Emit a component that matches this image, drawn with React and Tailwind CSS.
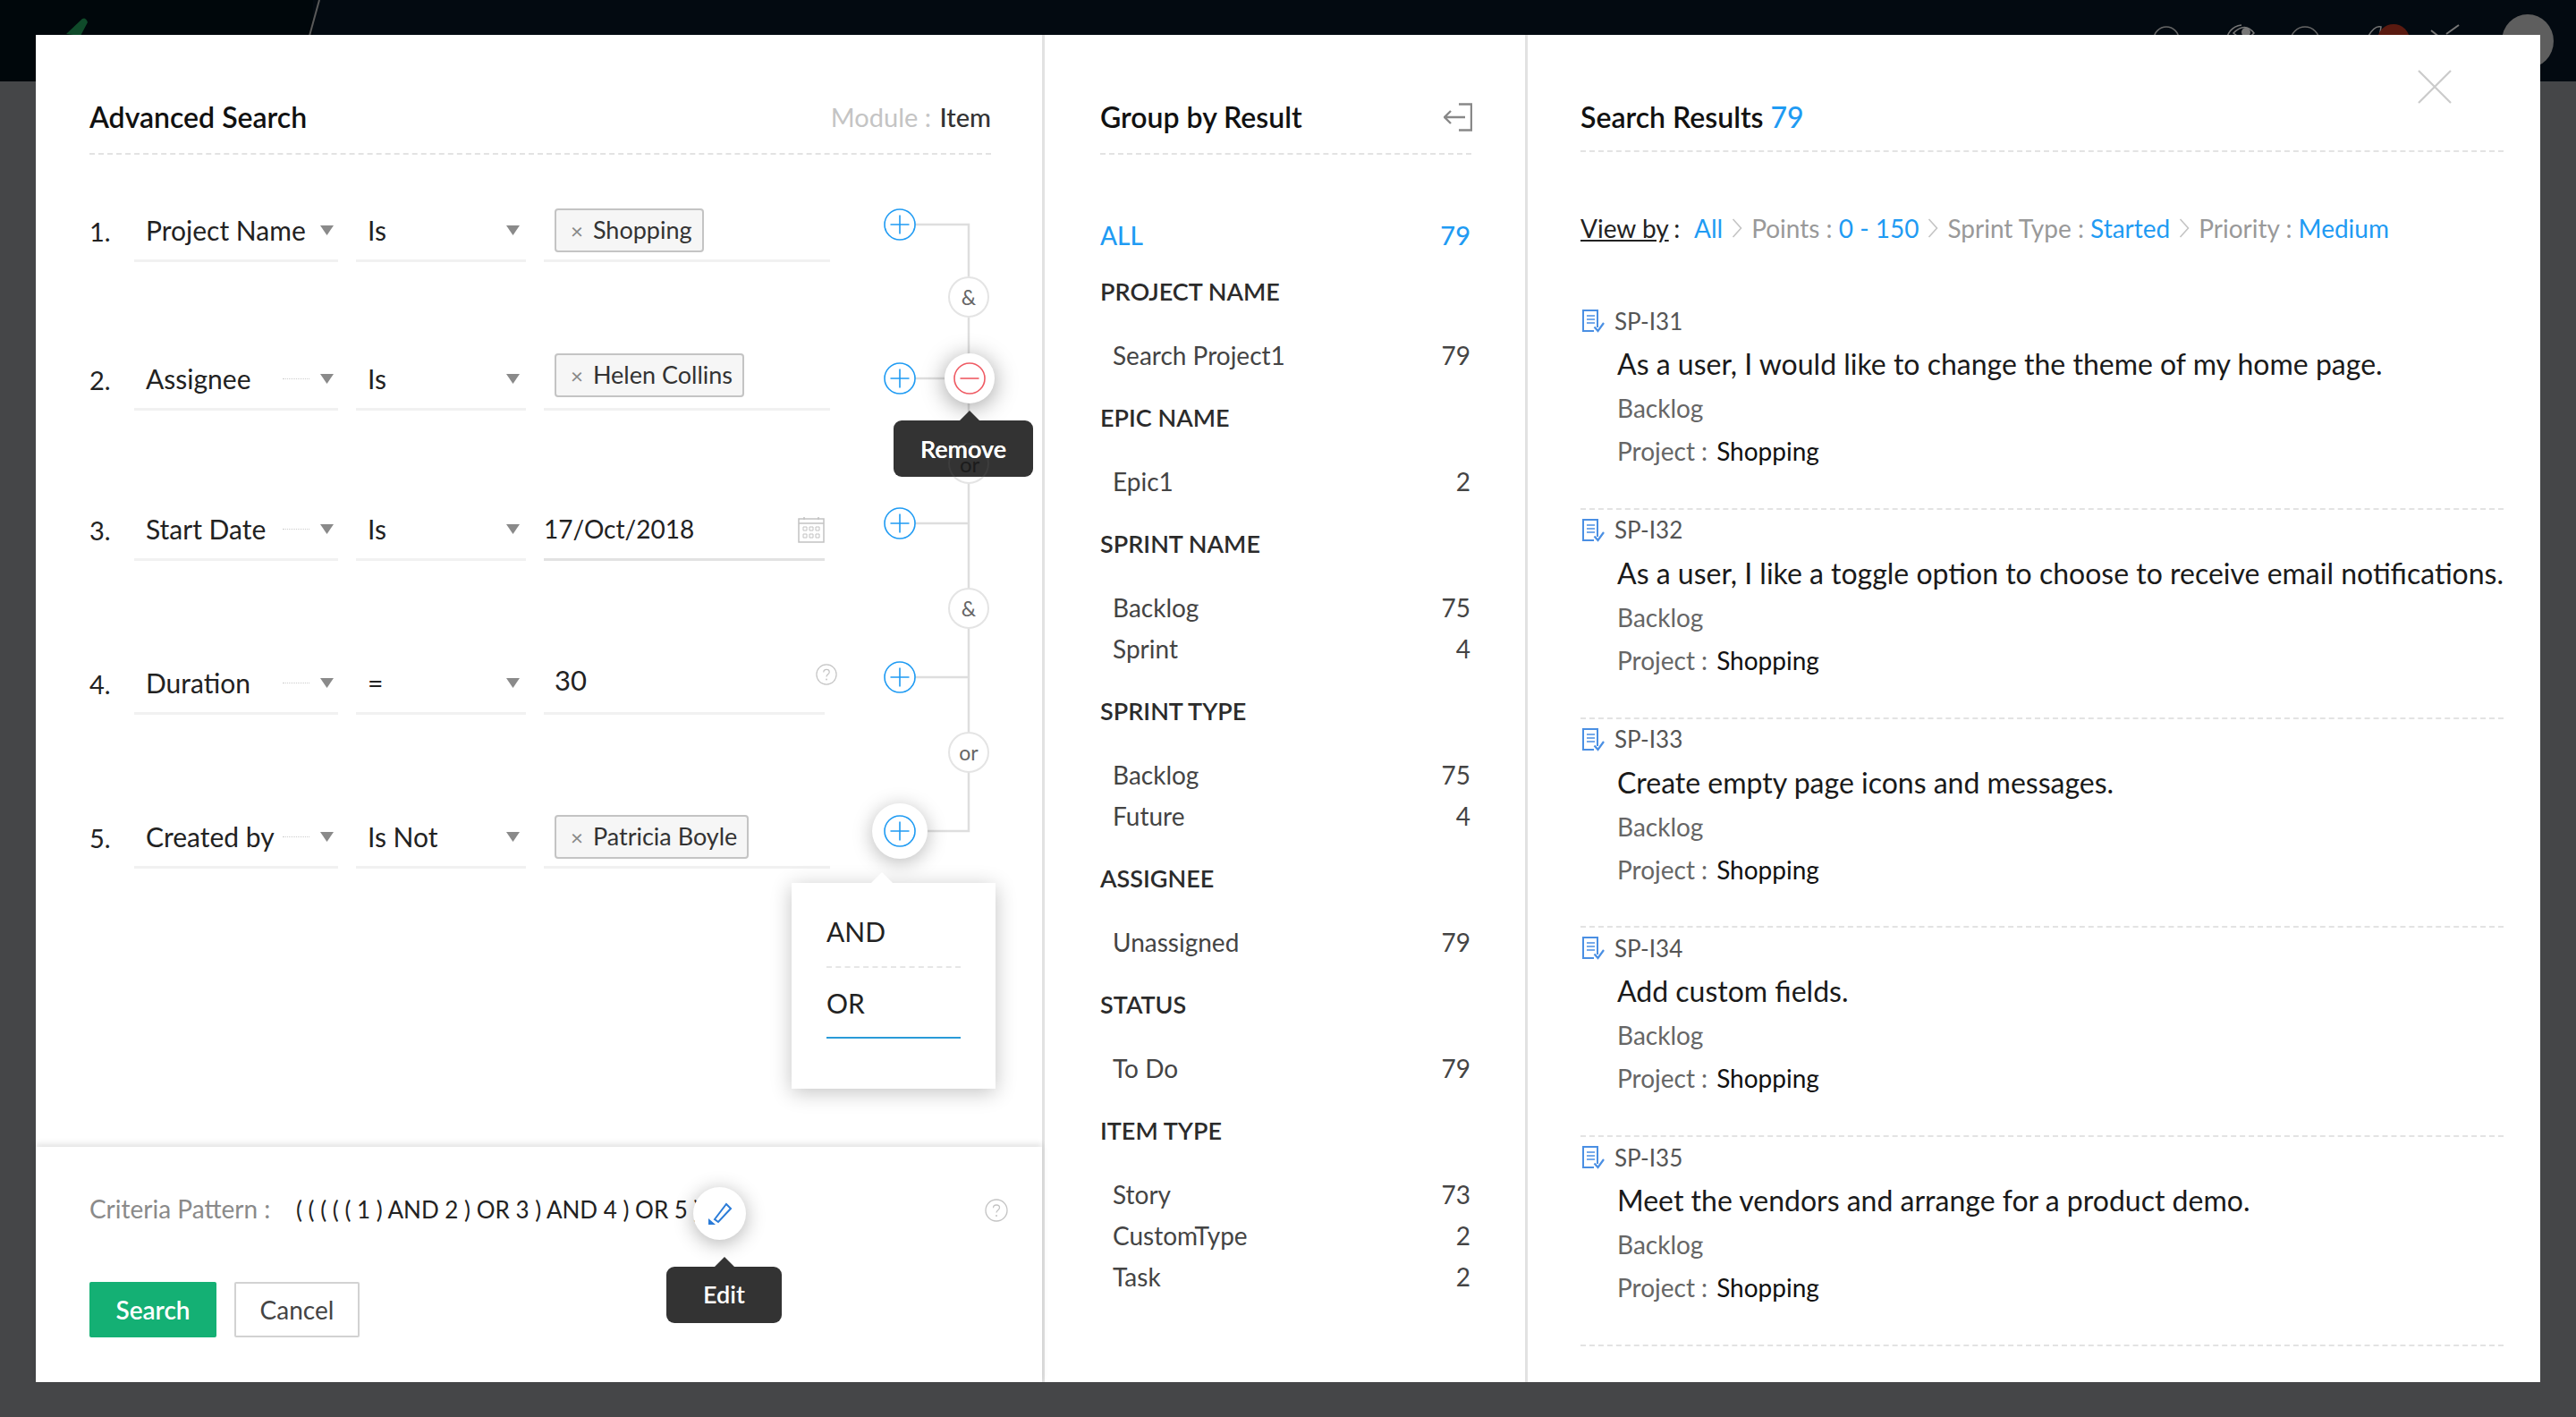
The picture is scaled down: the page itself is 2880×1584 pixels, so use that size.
import React from "react";

const Caret = () => (
  <svg width="15" height="11" viewBox="0 0 15 11" className="shrink-0"><polygon points="0,0 15,0 7.5,11" fill="#8a8a8a" /></svg>
);

const Chip = ({ label, className }) => (
  <div className={"flex items-center h-[49px] ml-[12px] pl-[16px] border-2 border-[#c4c4c4] rounded-[4px] bg-[#f6f6f6] text-[27px] text-[#333] " + className}>
    <span className="text-[24px] text-[#888] leading-none mr-[11px]">×</span>
    <span>{label}</span>
  </div>
);

const Sel = ({ children, w, pad, dots }) => (
  <div className={"relative flex items-center h-[60px] pb-[8px] border-b-[3px] border-[#f1f1f1] text-[30px] text-[#222] " + w + " " + pad}>
    <span className="flex-1">{children}</span>
    {dots && <span className="w-[30px] mr-[12px] border-t border-dotted border-[#ccc]" />}
    <Caret />
  </div>
);

const rows = [
  { n: "1.", f: "Project Name", o: "Is", mt: "mt-0", dots: false },
  { n: "2.", f: "Assignee", o: "Is", mt: "mt-[106px]", dots: true },
  { n: "3.", f: "Start Date", o: "Is", mt: "mt-[108px]", dots: true },
  { n: "4.", f: "Duration", o: "=", mt: "mt-[112px]", dots: true },
  { n: "5.", f: "Created by", o: "Is Not", mt: "mt-[112px]", dots: true },
];

const Help = ({ className }) => (
  <svg viewBox="0 0 26 26" className={className} fill="none">
    <circle cx="13" cy="13" r="12" stroke="#c4c4c4" strokeWidth="1.3" />
    <path d="M9.5 10.2c0-2 1.6-3.2 3.5-3.2s3.5 1.2 3.5 3c0 2.6-3.5 2.8-3.5 5.6" stroke="#c4c4c4" strokeWidth="1.3" />
    <circle cx="13" cy="19" r="1" fill="#c4c4c4" />
  </svg>
);

const Value = ({ i }) => {
  if (i === 0) return <div className="w-[320px] h-[60px] ml-[20px] flex items-end pb-[8px] border-b-[3px] border-[#f1f1f1]"><Chip label="Shopping" className="w-[167px]" /></div>;
  if (i === 1) return <div className="w-[320px] h-[60px] ml-[20px] flex items-end pb-[12px] border-b-[3px] border-[#f1f1f1]"><Chip label="Helen Collins" className="w-[212px]" /></div>;
  if (i === 4) return <div className="w-[320px] h-[60px] ml-[20px] flex items-end pb-[8px] border-b-[3px] border-[#f1f1f1]"><Chip label="Patricia Boyle" className="w-[217px]" /></div>;
  if (i === 2)
    return (
      <div className="w-[314px] h-[60px] ml-[20px] flex items-center justify-between pb-[8px] border-b-[3px] border-[#e2e2e2] text-[28px] text-[#222]">
        <span className="-mt-[2px]">17/Oct/2018</span>
        <svg width="30" height="30" viewBox="0 0 30 30" fill="none" stroke="#c2c2c2" strokeWidth="1.5">
          <rect x="1" y="3" width="28" height="26" />
          <path d="M1 8h28M7 1v3M23 1v3" />
          <path d="M6 12h4v4H6zM13 12h4v4h-4zM20 12h4v4h-4zM6 20h4v4H6zM13 20h4v4h-4zM20 20h4v4h-4z" strokeWidth="1" />
        </svg>
      </div>
    );
  return (
    <div className="relative w-[314px] h-[60px] ml-[20px] pl-[12px] flex items-center pb-[8px] border-b-[3px] border-[#f1f1f1] text-[31px] text-[#222]">
      <span className="-mt-[6px]">30</span>
      <Help className="absolute left-[304px] top-[3px] w-[24px] h-[24px]" />
    </div>
  );
};

/* connector diagram: coordinates are the modal's */
const plusY = [212, 384, 546, 718, 890];
const Connectors = () => (
  <svg className="absolute left-0 top-0 w-[1128px] h-[1000px] pointer-events-none" fill="none">
    <path d="M966 212H1043V890H984" stroke="#dedede" strokeWidth="2.5" />
    <path d="M966 384H1043M966 546H1043M966 718H1043" stroke="#dedede" strokeWidth="2.5" />
  </svg>
);
const Plus = ({ y, color = "#1f9bf3", minus }) => (
  <svg width="36" height="36" viewBox="0 0 36 36" fill="none" className={y}>
    <circle cx="18" cy="18" r="17" fill="#fff" stroke={color} strokeWidth="1.6" />
    <path d={minus ? "M7.5 18h21" : "M7.5 18h21M18 7.5v21"} stroke={color} strokeWidth="1.6" />
  </svg>
);
const Pill = ({ label, cls }) => (
  <div className={"absolute left-[1020px] w-[46px] h-[46px] rounded-full bg-white border-2 border-[#e4e4e4] flex items-center justify-center text-[23px] text-[#666] " + cls}>{label}</div>
);

const Tooltip = ({ label, cls, arrow }) => (
  <div className={"absolute rounded-[9px] bg-[#333] flex items-center justify-center text-[27px] font-semibold text-white " + cls}>
    <svg width="44" height="12" viewBox="0 0 44 12" className={"absolute -top-[11px] " + arrow}><polygon points="22,0 33,11 33,12 11,12 11,11" fill="#333" /></svg>
    {label}
  </div>
);

const LeftPanel = () => (
  <div className="relative w-[1128px] h-full flex flex-col shrink-0 border-r-[3px] border-[#e2e2e2]">
    <div className="mx-[60px] w-[1008px] mt-[69px] h-[46px] flex items-center justify-between">
      <h2 className="text-[32px] font-semibold text-[#111]">Advanced Search</h2>
      <div className="text-[29px] text-[#c4c4c4]">Module : <span className="text-[#333] font-medium ml-[2px]">Item</span></div>
    </div>
    <div className="mx-[60px] w-[1008px] mt-[17px] border-t-2 border-dashed border-[#e3e3e3]" />
    <div className="mt-[60px] pl-[60px]">
      {rows.map((r, i) => (
        <div key={r.n} className={"flex " + r.mt}>
          <div className="w-[50px] h-[60px] pb-[8px] flex items-center text-[29px] text-[#222]">{r.n}</div>
          <Sel w="w-[228px]" pad="pl-[13px] pr-[5px]" dots={r.dots}>{r.f}</Sel>
          <Sel w="w-[190px] ml-[20px]" pad="pl-[13px] pr-[7px]">{r.o}</Sel>
          <Value i={i} />
        </div>
      ))}
    </div>

    <Connectors />
    {plusY.map((y, i) => (
      <div key={y} className="absolute left-[948px]" style={{ top: y - 18 }}>
        {i === 4 && <div className="absolute -left-[13px] -top-[13px] w-[62px] h-[62px] rounded-full bg-white shadow-[0_4px_22px_rgba(0,0,0,0.28)]" />}
        <div className="relative"><Plus /></div>
      </div>
    ))}
    <Pill label="&" cls="top-[270px]" />
    <Pill label="or" cls="top-[456px]" />
    <Pill label="&" cls="top-[618px]" />
    <Pill label="or" cls="top-[779px]" />
    <div className="absolute left-[1016px] top-[356px] w-[56px] h-[56px] rounded-full bg-white shadow-[0_4px_26px_rgba(0,0,0,0.38)] flex items-center justify-center">
      <Plus color="#ef5a63" minus />
    </div>
    <Tooltip label="Remove" cls="left-[959px] top-[431px] w-[156px] h-[63px] pt-[2px]" arrow="left-[63px]" />
    <div className="absolute left-[1020px] top-[456px] w-[46px] h-[38px] overflow-hidden">
      <div className="w-[46px] h-[46px] rounded-full border-2 border-[#3d3d3d]" />
    </div>
    <span className="absolute left-[1033px] top-[463px] text-[24px] leading-[34px] text-[#1c1c1c]">or</span>
    <span className="absolute left-[959px] top-[431px] w-[156px] h-[63px] pt-[2px] flex items-center justify-center text-[27px] font-semibold text-white">Remove</span>

    {/* AND / OR popover */}
    <div className="absolute left-[845px] top-[948px] w-[228px] h-[230px] bg-white shadow-[0_4px_22px_rgba(0,0,0,0.24)] px-[39px] text-[30px] text-[#222]">
      <svg width="40" height="13" viewBox="0 0 40 13" className="absolute left-[81px] -top-[12px]"><polygon points="20,0 33,13 7,13" fill="#fff" /></svg>
      <div className="h-[95px] pt-[15px] flex items-center border-b-2 border-dashed border-[#e6e6e6]"><span>AND</span></div>
      <div className="h-[79px] pt-[2px] flex items-center border-b-2 border-[#2a9bd8]"><span>OR</span></div>
    </div>

    {/* footer */}
    <div className="mt-auto w-[1125px] h-[263px] relative pl-[60px] shadow-[0_-3px_7px_rgba(0,0,0,0.12)]">
      <div className="flex items-center pt-[50px] h-[91px]">
        <span className="text-[28px] text-[#8a8a8a] w-[231px] -mt-[3px]">Criteria Pattern :</span>
        <span className="text-[26px] text-[#222] whitespace-pre">( ( ( ( ( 1 ) AND 2 ) OR 3 ) AND 4 ) OR 5 )</span>
      </div>
      <div className="absolute left-[735px] top-[45px] w-[59px] h-[59px] rounded-full bg-white shadow-[0_4px_22px_rgba(0,0,0,0.3)] flex items-center justify-center">
        <svg width="28" height="28" viewBox="0 0 28 28" fill="none">
          <path d="M9 20 L22 3 L27 8 L13 23 Z" transform="translate(-1,0)" stroke="#2a7bd8" strokeWidth="2" />
          <polygon points="1,19 1,26 9,26" fill="#2a7bd8" />
        </svg>
      </div>
      <Tooltip label="Edit" cls="left-[705px] top-[134px] w-[129px] h-[63px]" arrow="left-[43px]" />
      <Help className="absolute left-[1061px] top-[58px] w-[26px] h-[26px]" />
      <div className="flex mt-[60px] gap-[20px]">
        <div className="w-[142px] h-[62px] rounded-[2px] bg-[#14b074] flex items-center justify-center text-[28px] font-semibold text-white">Search</div>
        <div className="w-[140px] h-[62px] rounded-[2px] border-2 border-[#d2d2d2] bg-white flex items-center justify-center text-[28px] text-[#444]">Cancel</div>
      </div>
    </div>
  </div>
);

const groups = [
  ["PROJECT NAME", [["Search Project1", 79]]],
  ["EPIC NAME", [["Epic1", 2]]],
  ["SPRINT NAME", [["Backlog", 75], ["Sprint", 4]]],
  ["SPRINT TYPE", [["Backlog", 75], ["Future", 4]]],
  ["ASSIGNEE", [["Unassigned", 79]]],
  ["STATUS", [["To Do", 79]]],
  ["ITEM TYPE", [["Story", 73], ["CustomType", 2], ["Task", 2]]],
];

const MiddlePanel = () => (
  <div className="w-[540px] h-full shrink-0 border-r-[3px] border-[#e2e2e2] pl-[62px] pr-[60px]">
    <div className="mt-[69px] h-[46px] flex items-center justify-between">
      <h2 className="text-[32px] font-semibold text-[#111]">Group by Result</h2>
      <svg width="32" height="32" viewBox="0 0 32 32" fill="none" stroke="#888" strokeWidth="2.4" className="-mr-[1px]">
        <path d="M17 1.5H31V30.5H17" />
        <path d="M1 16H24M8 9L1 16L8 23" />
      </svg>
    </div>
    <div className="mt-[17px] border-t-2 border-dashed border-[#e3e3e3]" />
    <div className="mt-[67px] h-[46px] flex items-center justify-between text-[28px] font-medium text-[#1f9bf3]">
      <span>ALL</span><span className="text-[29px] pr-[1px]">79</span>
    </div>
    <div className="mt-[17px]">
      {groups.map(([h, items]) => (
        <div key={h} className="pt-[0px] pb-[24px]">
          <div className="h-[46px] mb-[25px] flex items-center text-[27px] font-semibold text-[#2b2b2b]">{h}</div>
          {items.map(([k, v]) => (
            <div key={k} className="h-[46px] flex items-center justify-between pl-[14px] pr-[1px] text-[28px] text-[#444]">
              <span>{k}</span><span>{v}</span>
            </div>
          ))}
        </div>
      ))}
    </div>
  </div>
);

const results = [
  ["SP-I31", "As a user, I would like to change the theme of my home page."],
  ["SP-I32", "As a user, I like a toggle option to choose to receive email notifications."],
  ["SP-I33", "Create empty page icons and messages."],
  ["SP-I34", "Add custom fields."],
  ["SP-I35", "Meet the vendors and arrange for a product demo."],
];

const Chev = () => (
  <svg width="12" height="24" viewBox="0 0 12 24" fill="none" stroke="#c4c4c4" strokeWidth="1.6" className="mx-[10px]"><path d="M1.5 2L10.5 12L1.5 22" /></svg>
);

const DocIcon = () => (
  <svg width="25" height="26" viewBox="0 0 25 26" fill="none" className="shrink-0">
    <path d="M17 20V1H1V24H13" stroke="#4a8fe3" strokeWidth="2" />
    <path d="M5 7h9M5 11h9M5 15h9" stroke="#4a8fe3" strokeWidth="1.7" />
    <path d="M13.5 19.5L17.5 24L24 15" stroke="#4a8fe3" strokeWidth="2.2" />
  </svg>
);

const RightPanel = () => (
  <div className="relative flex-1 pl-[59px] pr-[60px]">
    <svg width="38" height="38" viewBox="0 0 38 38" className="absolute left-[995px] top-[39px]" stroke="#cbcbcb" strokeWidth="2.2"><path d="M1 1L37 37M37 1L1 37" /></svg>
    <div className="mt-[69px] h-[46px] flex items-center">
      <h2 className="text-[32px] font-semibold text-[#111]">Search Results <span className="text-[#1f9bf3] font-medium">79</span></h2>
    </div>
    <div className="mt-[14px] border-t-2 border-dashed border-[#e3e3e3]" />
    <div className="mt-[63px] h-[44px] flex items-center text-[28px] text-[#999] whitespace-pre">
      <span className="text-[#222] underline w-[97px]">View by</span>
      <span className="text-[#222] w-[30px]"> :</span>
      <span className="text-[#1f9bf3]">All</span>
      <Chev />
      <span>Points : </span><span className="text-[#1f9bf3]">0 - 150</span>
      <Chev />
      <span>Sprint Type : </span><span className="text-[#1f9bf3]">Started</span>
      <Chev />
      <span>Priority : </span><span className="text-[#1f9bf3]">Medium</span>
    </div>
    <div className="mt-[59px]">
      {results.map(([id, title]) => (
        <div key={id} className="h-[233.8px] border-b-2 border-dashed border-[#e3e3e3]">
          <div className="h-[46px] flex items-center pl-[2px]">
            <DocIcon />
            <span className="ml-[11px] text-[26px] text-[#555]">{id}</span>
          </div>
          <div className="pl-[41px] h-[50px] flex items-center text-[32px] text-[#1a1a1a] whitespace-nowrap">{title}</div>
          <div className="pl-[41px] h-[48px] flex items-center text-[28px] text-[#666]">Backlog</div>
          <div className="pl-[41px] h-[48px] flex items-center text-[28px] text-[#666]">Project :<span className="ml-[10px] text-[#111]">Shopping</span></div>
        </div>
      ))}
    </div>
  </div>
);

const TopBar = () => (
  <div className="absolute left-0 top-0 w-full h-[91px] bg-[#030a11] overflow-hidden">
    <div className="absolute left-0 top-0 w-[350px] h-full bg-[#00070b]" />
    <svg width="2880" height="91" className="absolute left-0 top-0" fill="none">
      <path d="M74 38L92 21Q96 19 98 25L90 40Z" fill="#0f4a2a" />
      <path d="M357 0L346 40" stroke="#5a5a5a" strokeWidth="2" />
      <circle cx="2422" cy="44" r="14" stroke="#666" strokeWidth="1.5" />
      <path d="M2488 50Q2490 30 2506 28M2497 37Q2510 24 2520 37Q2510 48 2497 37Z" stroke="#777" strokeWidth="1.5" />
      <circle cx="2511" cy="36" r="5" fill="#777" />
      <circle cx="2577" cy="46" r="16" stroke="#666" strokeWidth="1.5" />
      <path d="M2648 40Q2655 28 2662 30L2660 42" stroke="#777" strokeWidth="1.5" />
      <circle cx="2676" cy="45" r="18" fill="#5a1a10" />
      <path d="M2718 34l10 8M2735 38l14-10" stroke="#777" strokeWidth="2" />
      <ellipse cx="2826" cy="46" rx="29" ry="30" fill="#5e5e5e" />
    </svg>
    <span className="absolute left-[163px] top-[30px] text-[30px] font-medium text-[#6b5226] leading-[40px]">Projects</span>
  </div>
);

export default function App() {
  return (
    <div className="relative w-[2880px] h-[1584px] overflow-hidden bg-[#454648] [font-family:Lato,sans-serif] pt-[39px] pl-[40px]">
      <TopBar />
      <div className="relative flex w-[2800px] h-[1506px] bg-white">
        <LeftPanel />
        <MiddlePanel />
        <RightPanel />
      </div>
    </div>
  );
}
